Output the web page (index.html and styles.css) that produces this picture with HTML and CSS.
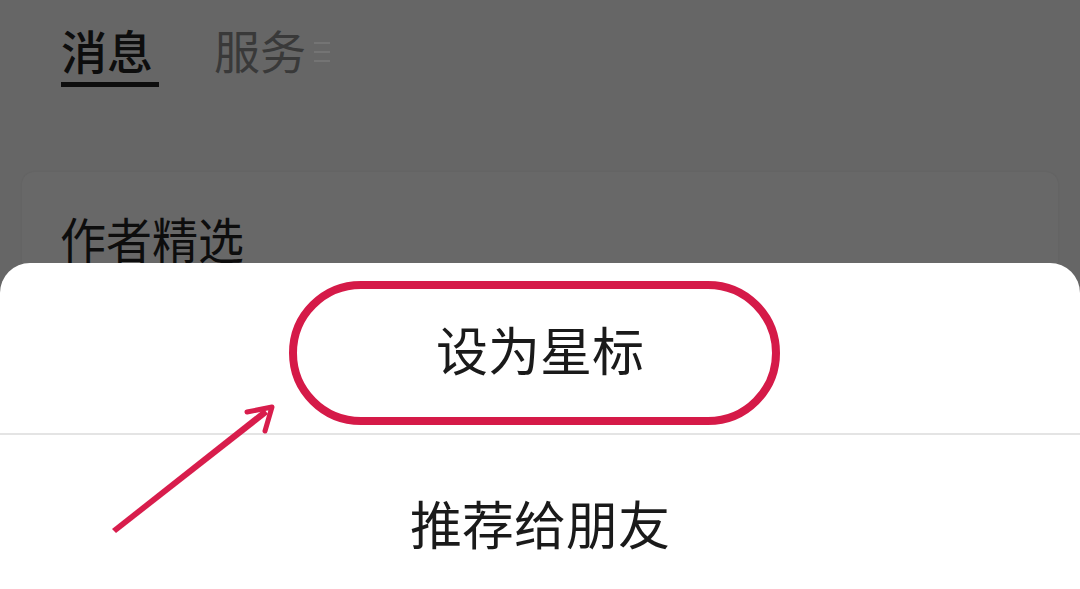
FILE: index.html
```html
<!DOCTYPE html>
<html lang="zh-CN">
<head>
  <meta charset="UTF-8">
  <meta name="viewport" content="width=device-width, initial-scale=1.0">
  <title>设为星标</title>
  <link rel="stylesheet" href="styles.css">
</head>
<body>
  <div class="page">
    <nav class="tabs">
      <div class="tab active">消息<span class="bar"></span></div>
      <div class="tab">服务</div>
      <div class="menu-icon"><span></span><span></span><span></span></div>
    </nav>

    <div class="card">
      <h2>作者精选</h2>
    </div>
  </div>

  <!-- bottom sheet over the dimmed page -->
  <div class="sheet">
    <div class="row first">设为星标</div>
    <div class="row second">推荐给朋友</div>

    <div class="ring"></div>
    <svg class="arrow" width="200" height="150" viewBox="0 0 200 150">
      <polygon points="12,146 16,150 168,31 164,26" fill="#d81d4c"/>
      <path d="M147 29 L172 24 L165 48" fill="none" stroke="#d81d4c" stroke-width="5" stroke-linecap="round" stroke-linejoin="round"/>
    </svg>
  </div>
</body>
</html>
```

FILE: styles.css
```css
body {
  margin: 0;
  width: 1080px;
  height: 589px;
  overflow: hidden;
  position: relative;
  background-color: #666666;
  font-family: "Noto Sans CJK SC", "Noto Sans", sans-serif;
}
.page {
  padding-top: 21px;
}
.tabs {
  display: flex;
  align-items: flex-start;
  gap: 55px;
  padding-left: 61px;
  height: 70px;
}
.tab {
  font-size: 46px;
  line-height: 56px;
  color: #393939;
  position: relative;
}
.tab.active {
  color: #0d0d0d;
  font-weight: 500;
  width: 98px;
}
.tab .bar {
  position: absolute;
  left: 0;
  right: 0;
  top: 61px;
  height: 5px;
  background-color: #0d0d0d;
}
.menu-icon {
  margin-left: -47px;
  padding-top: 21px;
  display: flex;
  flex-direction: column;
  gap: 7px;
}
.menu-icon span {
  display: block;
  width: 16px;
  height: 2px;
  background-color: #747474;
}
.card {
  margin: 81px 22px 0;
  height: 200px;
  border-radius: 12px;
  background-color: #686868;
  box-shadow: 0 0 2px rgba(0,0,0,0.08);
  padding: 38px 38px;
}
.card h2 {
  margin: 0;
  font-size: 46px;
  font-weight: 400;
  line-height: 56px;
  color: #0d0d0d;
  transform: scaleY(1.06);
}
.sheet {
  position: absolute;
  left: 0;
  right: 0;
  top: 263px;
  bottom: 0;
  background-color: #ffffff;
  border-radius: 30px 30px 0 0;
}
.row {
  display: flex;
  align-items: center;
  justify-content: center;
  font-size: 52px;
  color: #1a1a1a;
}
.row.first {
  height: 170px;
  border-bottom: 2px solid #e4e4e4;
}
.row.second {
  height: 174px;
}
.ring {
  position: absolute;
  left: 289px;
  top: 18px;
  width: 475px;
  height: 128px;
  border: 8px solid #d51a48;
  border-radius: 72px;
}
.arrow {
  position: absolute;
  left: 100px;
  top: 120px;
}
```
